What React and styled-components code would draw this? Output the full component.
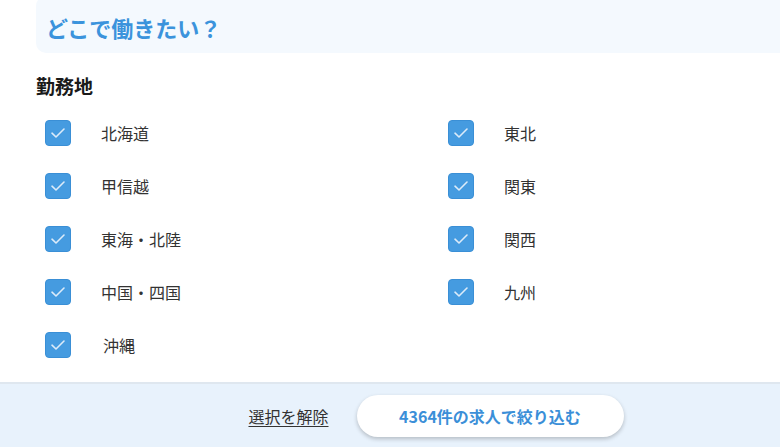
import styled, { createGlobalStyle } from "styled-components";

const GlobalStyle = createGlobalStyle`
  html, body {
    margin: 0;
    padding: 0;
    background: #fff;
  }
  body {
    font-family: "Noto Sans CJK JP", "Noto Sans", sans-serif;
    color: #333;
  }
`;

const prefectures = [
  ["北海道", "東北"],
  ["甲信越", "関東"],
  ["東海・北陸", "関西"],
  ["中国・四国", "九州"],
  ["沖縄"],
];

const Page = styled.div`
  display: flex;
  flex-direction: column;
  overflow: hidden;
`;

const Content = styled.div`
  padding-left: 36px;
  height: 382px;
`;

const Header = styled.div`
  margin-top: -4px;
  height: 57px;
  display: flex;
  align-items: center;
  padding: 4px 10px 0;
  box-sizing: border-box;
  background: #f4f9fe;
  border-radius: 10px 0 0 10px;
`;

const Title = styled.h1`
  margin: 0;
  font-size: 22px;
  font-weight: 700;
  color: #3b93dc;
`;

const Section = styled.h2`
  margin: 18px 0 0;
  font-size: 19px;
  font-weight: 700;
  color: #1a1a1a;
  line-height: 30px;
`;

const Grid = styled.div`
  display: grid;
  grid-template-columns: 403px 1fr;
  row-gap: 27px;
  margin-top: 19px;
  padding-left: 9px;
`;

const Item = styled.label`
  display: flex;
  align-items: center;
  gap: ${(p) => (p.$wide ? 32 : 30)}px;
  height: 26px;
  font-size: 16px;
  color: #333;
`;

const Box = styled.span`
  width: 26px;
  height: 26px;
  box-sizing: border-box;
  border-radius: 4px;
  background: #459be0;
  border: 1px solid #3a8fd6;
  display: flex;
  align-items: center;
  justify-content: center;
  flex-shrink: 0;
`;

const Footer = styled.div`
  height: 65px;
  background: #e8f2fc;
  border-top: 2px solid #dfe7ef;
  display: flex;
  align-items: flex-start;
  justify-content: center;
  gap: 28px;
  padding: 11px 0 0 92px;
  box-sizing: border-box;
`;

const Clear = styled.a`
  font-size: 16px;
  color: #333;
  text-decoration: underline;
  text-underline-offset: 3px;
  line-height: 42px;
  cursor: pointer;
`;

const Submit = styled.button`
  width: 267px;
  height: 42px;
  border: none;
  border-radius: 21px;
  background: #fff;
  box-shadow: 0 2px 4px rgba(0, 0, 0, 0.22);
  font-family: inherit;
  font-size: 16px;
  font-weight: 700;
  color: #3b8fd8;
  cursor: pointer;
`;

const Check = () => (
  <svg width="16" height="12" viewBox="0 0 16 12" fill="none">
    <path
      d="M2 6.2 L6 10 L14 2"
      stroke="#dcebf9"
      strokeWidth="1.6"
      strokeLinecap="round"
      strokeLinejoin="round"
    />
  </svg>
);

const Option = ({ label }) => (
  <Item $wide={label === "沖縄"}>
    <Box>
      <Check />
    </Box>
    {label}
  </Item>
);

export default function App() {
  return (
    <>
      <GlobalStyle />
      <Page>
        <Content>
          <Header>
            <Title>どこで働きたい？</Title>
          </Header>
          <Section>勤務地</Section>
          <Grid>
            {prefectures.flat().map((name) => (
              <Option key={name} label={name} />
            ))}
          </Grid>
        </Content>
        <Footer>
          <Clear>選択を解除</Clear>
          <Submit>4364件の求人で絞り込む</Submit>
        </Footer>
      </Page>
    </>
  );
}
